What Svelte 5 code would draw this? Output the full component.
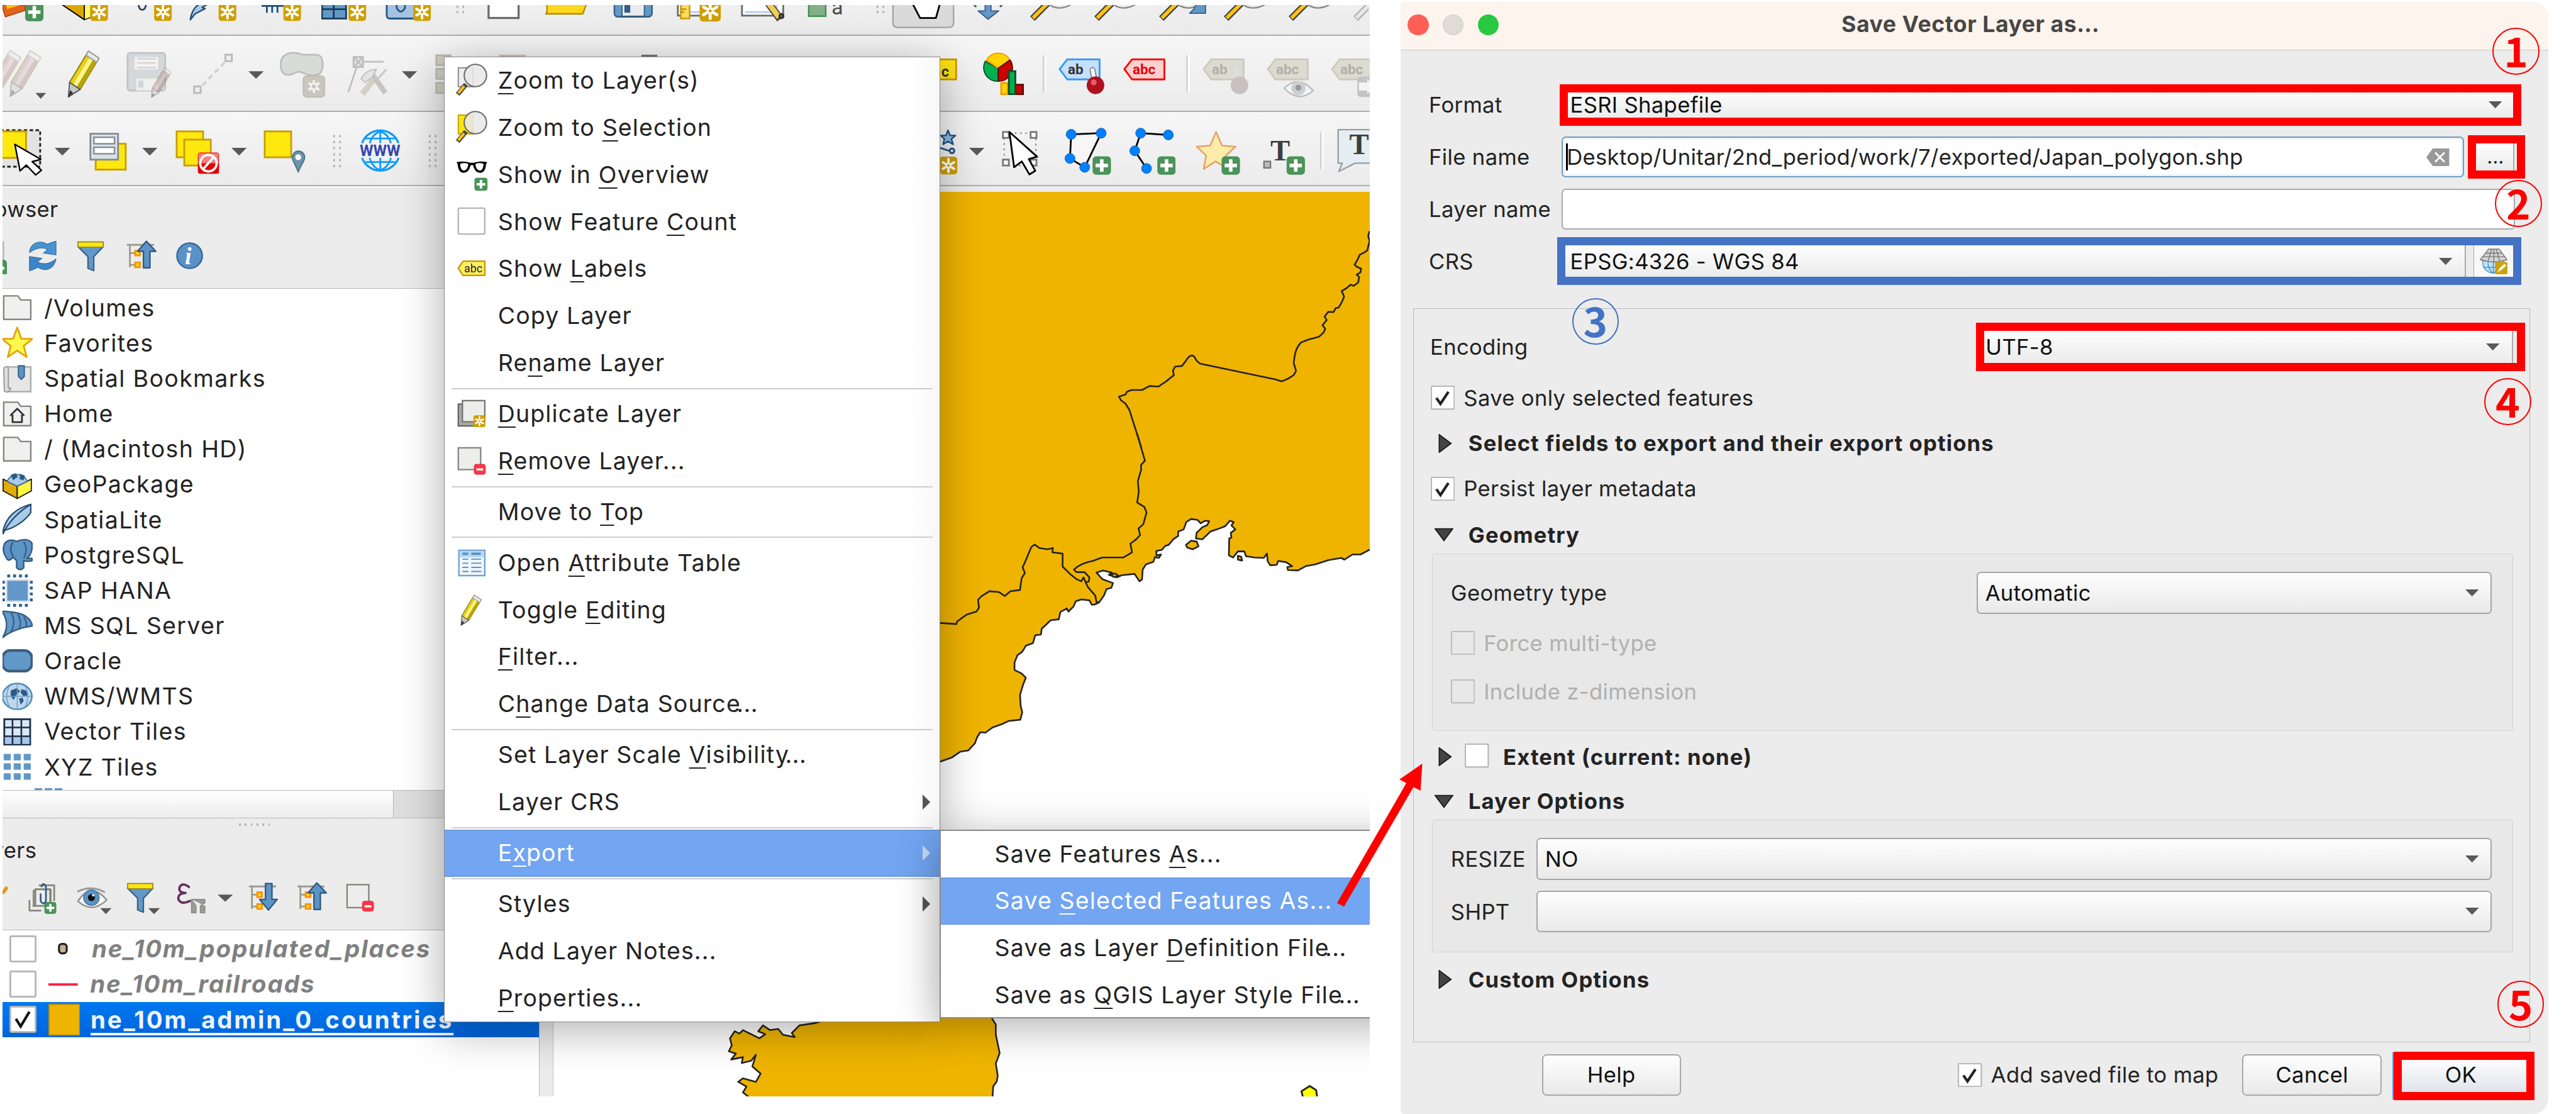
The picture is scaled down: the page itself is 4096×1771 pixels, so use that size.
<script>
  // ---- small drawing helpers; every icon strip shares the window's coordinates ----
  const rect = (x, y, w, h, fill, stroke = 'none', sw = 3, r = 0) =>
    `<rect x="${x}" y="${y}" width="${w}" height="${h}" rx="${r}" fill="${fill}" stroke="${stroke}" stroke-width="${sw}"/>`;
  const path = (d, fill = 'none', stroke = 'none', sw = 3, extra = '') =>
    `<path d="${d}" fill="${fill}" stroke="${stroke}" stroke-width="${sw}" stroke-linejoin="round" ${extra}/>`;
  const dot = (cx, cy, r, fill, stroke = 'none', sw = 2) =>
    `<circle cx="${cx}" cy="${cy}" r="${r}" fill="${fill}" stroke="${stroke}" stroke-width="${sw}"/>`;
  const text = (x, y, size, fill, t, extra = '') =>
    `<text x="${x}" y="${y}" font-size="${size}" fill="${fill}" font-family="Roboto, sans-serif" ${extra}>${t}</text>`;
  const down = (x, y, w = 26, h = 13) => path(`M${x} ${y}h${w}l${-w / 2} ${h}z`, '#595959');
  const plus = (x, y, s = 30) =>
    rect(x, y, s, s, '#4b9358', '#3f8a50', 1, s / 6) +
    path(`M${x + s / 2} ${y + s * 0.15}v${s * 0.7}M${x + s * 0.15} ${y + s / 2}h${s * 0.7}`, 'none', '#fff', s * 0.2);
  const spark = (x, y, s = 30, fill = '#cf9f04') => {
    const c = s / 2, a = s * 0.36, b = a * 0.5, e = a * 0.87;
    return rect(x, y, s, s, fill, 'none', 0, s / 6) +
      path(`M${x + c} ${y + c - a}v${2 * a}M${x + c - e} ${y + c - b}l${2 * e} ${2 * b}M${x + c + e} ${y + c - b}l${-2 * e} ${2 * b}`, 'none', '#fff', s * 0.14, 'stroke-linecap="round"') +
      dot(x + c, y + c, s * 0.07, fill);
  };
  const minus = (x, y, s) => rect(x, y, s, s * 0.9, '#ff3545', '#e02637', 1, s / 5) + rect(x + s * 0.2, y + s * 0.36, s * 0.6, s * 0.2, '#fff');
  const grip = (x, ys) => ys.map((y) => rect(x, y, 3, 4, '#b4b4b4') + rect(x + 10, y, 3, 4, '#b4b4b4')).join('');
  const rows6 = [229, 239, 249, 260, 270, 280];
  const sep = (x, y) => rect(x, y, 3, 63, '#d2d2d2') + rect(x + 3, y, 3, 63, '#fff');
  const cursor = (x, y, s = 1) =>
    `<g transform="translate(${x} ${y}) scale(${s})">` + path('M0 0L9 46L20 36L36 53L46 45L30 30L45 26Z', '#fff', '#000', 2.6) + '</g>';
  const lens = (x, grey = false) =>
    `<g opacity="${grey ? 0.35 : 1}">` + path(`M${x + 4} 32L${x + 30} 6`, 'none', '#444', 11) + path(`M${x + 5} 31L${x + 29} 7`, 'none', grey ? '#ddd' : '#fcc411', 6) +
    path(`M${x + 30} 6q18 16 44 0`, '#eee', '#888', 2.5) + '</g>';
  const tag = (x, y, w, h, fill, stroke, t, color, size = 24) =>
    path(`M${x} ${y + h / 2}L${x + 13} ${y + 1}H${x + w}V${y + h}H${x + 13}Z`, fill, stroke, 3) +
    text(x + 14, y + h * 0.76, size, color, t, 'font-weight="700"');
  const funnel = (x, y) =>
    path(`M${x + 1} ${y + 9}L${x + 18} ${y + 26}V${y + 46}L${x + 28} ${y + 50}V${y + 26}L${x + 44} ${y + 9}Z`, '#6198c8', '#355d82', 2.2) +
    rect(x + 1, y + 1, 43, 9, '#fbe610', '#9a8a2c', 2);
  const tree = (x, y, up) =>
    path(`M${x} ${y + 6}h46M${x + 5} ${y + 6}v38M${x + 5} ${y + 20}h10M${x + 5} ${y + 40}h10`, 'none', '#9b9b90', 3) +
    rect(x + 14, y + 16, 8, 8, '#ffe00d', '#fe8d01', 3) + rect(x + 14, y + 36, 8, 8, '#ffe00d', '#fe8d01', 3) +
    path(up ? `M${x + 33} ${y}L${x + 49} ${y + 17}H${x + 39}V${y + 45}H${x + 28}V${y + 17}H${x + 18}Z`
            : `M${x + 33} ${y + 46}L${x + 48} ${y + 28}H${x + 39}V${y + 1}H${x + 28}V${y + 28}H${x + 18}Z`, '#5c94c6', '#2f5a80', 2.5);
  const pencil = (x, y, s = 1, o = 1) =>
    `<g opacity="${o}" transform="translate(${x} ${y}) scale(${s})">` +
    path('M3 53L35 0L53 12L21 65Z', o < 1 ? '#b98e8e' : '#e8d015', '#8a7c12', 2) + path('M9 57L41 4L47 8L15 61Z', o < 1 ? '#d0b4b4' : '#fbf38f') + path('M15 61L47 8L53 12L21 65Z', o < 1 ? '#a07a7a' : '#b7a506') +
    path('M35 0L53 12L49 19L31 7Z', '#e9e9ec', '#9a9a9a', 2) + path('M3 53L21 65L1 78Z', '#c7c7c7', '#555', 2) + path('M1 78L4 66L9 71Z', '#333') + '</g>';

  // ---- toolbars: [left edge, width, drawing] ----
  const bar1 = [
    [4, 72, path('M4 9H42V18L9 29L4 13Z', '#e4631e', '#b5440c', 2) + path('M10 9H34L12 16Z', '#fbc412') + plus(43, 6)],
    [100, 84, path('M103 7L143 34V7Z', '#dba800', '#000', 2) + path('M143 7H154V30L143 34Z', '#fdf969', '#000', 1.5) + spark(153, 6)],
    [232, 62, path('M236 6C234 21 249 21 248 6', 'none', '#2b4a68', 3) + spark(262, 6)],
    [320, 84, path('M324 34C326 18 334 10 340 7H354L344 13L349 15L332 24Z', '#a9c8e8', '#254b73', 2.5) + spark(372, 6)],
    [444, 70, rect(445, 7, 38, 5, '#1d4f7c') + path('M454 9V22M463 9V22M472 9V22', 'none', '#1d4f7c', 3) + spark(482, 6)],
    [546, 78, rect(547, 5, 41, 27, '#6198c8', '#1b3b58', 3) + path('M567 5V32M547 16H588', 'none', '#1b3b58', 3) + spark(592, 6)],
    [655, 80, rect(657, -10, 50, 42, '#a5c2e2', '#24557e', 3, 5) + path('M674 6V14Q681 26 688 14V6', 'none', '#24557e', 3) + spark(702, 6)],
    [774, 18, grip(776, [10, 19])],
    [828, 56, rect(830, 0, 51, 31, '#fff', '#6a6a6a', 3.5)],
    [926, 72, path('M930 7V21L928 24H991L997 7Z', '#fdd71c', '#b38b06', 2.5)],
    [1042, 68, rect(1044, -10, 64, 39, '#6198c8', '#355d82', 2.5, 6) + rect(1057, 0, 38, 28, '#e9ecee', '#355d82', 2) + rect(1061, 0, 10, 22, '#355d82')],
    [1149, 78, rect(1152, 0, 60, 27, '#fff', '#6a6a6a', 3) + path('M1160 21H1210', 'none', '#b9cff5', 3) + rect(1157, 0, 15, 32, '#fddc55', '#c8930b', 2.5) + path('M1157 16h9M1157 21h6', 'none', '#b27d05', 2) + spark(1189, 1, 36)],
    [1258, 78, rect(1261, 0, 70, 27, '#fff', '#6a6a6a', 3) + path('M1266 21H1320V0', 'none', '#b9cff5', 3) + path('M1306 6L1326 33', 'none', '#4a4536', 13) + path('M1306 6L1324 30', 'none', '#f1ce54', 9) + dot(1328, 28, 4, '#555', '#222')],
    [1372, 66, rect(1374, 0, 29, 28, '#82b088', '#3f8f4e', 2.5) + text(1413, 25, 36, '#4c4c4c', 'a')],
    [1488, 18, grip(1490, [10, 19])],
    [1516, 108, rect(1518, -12, 103, 59, '#dadada', '#a3a3a3', 2.5, 7) + path('M1551 6L1564 31H1591L1598 6', '#fff', '#000', 3)],
    [1650, 56, path('M1674 4V19H1662L1679 33L1697 19H1684V4Z', '#6198c8', '#355d82', 2) + path('M1655 9l4 3M1703 9l-4 3', 'none', '#355d82', 3)],
    [1748, 72, lens(1750)], [1858, 72, lens(1860)],
    [1968, 84, lens(1970) + path('M2034 6H2049V23H2022L2029 16Z', '#6198c8', '#355d82', 2)],
    [2078, 72, lens(2080)], [2188, 72, lens(2190)], [2298, 28, lens(2300, true)]
  ];
  const faded = (x, y, h) => rect(x, y, 24, h, '#cfcdc2', '#bbb9ae', 3);
  const bar2 = [
    [4, 76, pencil(-18, 86, 1, 0.35) + pencil(16, 86, 1, 0.35) + down(60, 158, 18, 10)],
    [112, 60, pencil(115, 87)],
    [214, 80, rect(217, 90, 64, 64, '#d5d8db', '#c0c3c7', 3, 5) + rect(229, 97, 40, 21, '#f2f2f2') + path('M233 100h32M233 107h32M233 115h32', 'none', '#d2d4d6', 2.5) + rect(232, 134, 36, 20, '#efefef') + rect(235, 137, 9, 12, '#d2d5d8') + pencil(257, 115, .65, .45)],
    [326, 72, rect(383, 93, 11, 11, '#eee', '#b9b9b9', 3) + rect(330, 147, 11, 11, '#eee', '#b9b9b9', 3) + path('M344 145L382 106', 'none', '#cdd3cf', 4, 'stroke-dasharray="9 6"')],
    [422, 28, down(422, 121)],
    [474, 80, path('M478 115C474 90 496 87 512 92C530 97 548 84 549 108C549 126 541 128 532 128C518 128 512 118 501 124C486 132 479 124 478 115Z', '#d8dcd9', '#bcbfbd', 3) + rect(516, 129, 36, 36, '#c9c7bb', '#bdbbae', 2, 6) + path('M534 136v22M525 141l18 12M543 141l-18 12', 'none', '#f2f2f2', 4) + dot(534, 147, 5, '#c9c7bb', '#f2f2f2', 3)],
    [588, 72, rect(601, 97, 16, 17, '#e2e2e2', '#bbb', 3) + path('M603 99l12 13M615 99l-12 13M617 105h35M606 115L592 157', 'none', '#c0c0c0', 3) + path('M616 160L634 136', 'none', '#d3d0c4', 10) + path('M655 158L634 128', 'none', '#c9c3be', 9) + path('M614 134Q622 118 640 118L632 132L620 140Z', '#e4e4e4', '#bdbdbd', 2) + path('M642 134L657 118', 'none', '#cdcdcd', 4)],
    [683, 28, down(683, 121)],
    [738, 52, faded(741, 94, 17) + faded(741, 117, 17) + faded(741, 141, 17)],
    [792, 240, rect(848, 93, 46, 5, '#cfc2b6')],
    [1088, 40, rect(1090, 93, 27, 5, '#777')],
    [1598, 34, rect(1580, 101, 45, 34, '#ffe310', '#c79800', 3) + text(1600, 130, 25, '#333', 'c', 'font-weight="700"')],
    [1670, 72, path('M1696 116L1674 104A23 23 0 0 0 1696 138Z', '#00b04e', '#114b28', 2) + path('M1696 116L1676 102A23 23 0 0 1 1716 102Z', '#ffd400', '#fa9b00', 2) + path('M1696 116L1716 102A23 23 0 0 1 1696 138Z', '#cc0000', '#5c0000', 2) + rect(1701, 141, 11, 19, '#ffd400', '#f79a00', 3) + rect(1725, 144, 13, 16, '#c00', '#640000', 3) + rect(1714, 121, 11, 39, '#00b04e', '#114b28', 3)],
    [1772, 8, sep(1772, 94)],
    [1798, 82, tag(1801, 100, 68, 35, '#c4e0fc', '#3397f8', 'ab', '#333') + path('M1857 119L1861 140', 'none', '#888', 10, 'stroke-linecap="round"') + path('M1857 119L1861 140', 'none', '#fff', 6, 'stroke-linecap="round"') + dot(1862, 145, 15, '#b0101f') + dot(1859, 140, 5, '#e75b64')],
    [1908, 76, tag(1911, 100, 68, 35, '#ffd0d0', '#fb0000', 'abc', '#e60012')],
    [2016, 8, sep(2016, 94)],
    [2042, 82, tag(2045, 100, 68, 35, '#dcdbd0', '#cbcabf', 'ab', '#b0b0a8') + path('M2100 119L2104 140', 'none', '#ddd', 9, 'stroke-linecap="round"') + dot(2106, 145, 15, '#cbc0c0')],
    [2152, 84, tag(2154, 100, 68, 35, '#dcdbd0', '#cbcabf', 'abc', '#b0b0a8') + path('M2182 150Q2206 126 2231 154Q2206 176 2182 150Z', '#f4f4f4', '#bcbcbc', 2.5) + dot(2206, 150, 12, '#c8d0d6') + dot(2206, 149, 5, '#999')],
    [2262, 66, tag(2264, 100, 68, 35, '#dcdbd0', '#cbcabf', 'abc', '#b0b0a8') + rect(2307, 130, 40, 35, '#c3c5c5', 'none', 0, 6) + path('M2310 140h14v-6l12 13l-12 13v-6h-14z', '#f4f4f4')]
  ];
  const bluedot = (x, y) => dot(x, y, 8.5, '#0080ff', '#1b5fae', 1);
  const bar3 = [
    [4, 72, rect(-10, 221, 78, 62, '#e3e3e3', '#222', 3).replace('/>', ' stroke-dasharray="6 4"/>') + rect(-10, 223, 54, 45, '#ffe80d', '#c99c06', 3) + cursor(25, 245, .98)],
    [93, 27, down(93, 251)],
    [150, 68, rect(163, 244, 51, 44, '#ffe80d', '#c99c06', 3) + rect(154, 227, 47, 44, '#d7e3ee', '#868a8e', 3) + rect(160, 233, 35, 11, '#fff', '#868a8e', 2.5) + rect(160, 250, 35, 11, '#fff', '#868a8e', 2.5)],
    [242, 28, down(242, 251)],
    [298, 76, rect(300, 223, 45, 44, '#ffe80d', '#c99c06', 3) + rect(313, 237, 45, 44, '#ffe80d', '#c99c06', 3) + rect(336, 259, 36, 36, '#e50000', 'none', 0, 4) + path('M337 277V260H371V277Z', '#fa7d7d') + `<circle cx="354" cy="277" r="14" fill="none" stroke="#fff" stroke-width="4"/>` + path('M345 287L363 267', 'none', '#fff', 4)],
    [393, 28, down(393, 251)],
    [448, 74, rect(450, 223, 45, 44, '#ffe80d', '#c99c06', 3) + path('M507 292C502 278 497 274 497 267A10.5 10.5 0 0 1 518 267C518 274 512 278 507 292Z', '#6d95aa', '#4b7287', 2) + dot(507, 267, 5, '#fff')],
    [564, 20, grip(566, rows6)],
    [610, 72, path('M615 243A33 33 0 0 1 677 243M615 268A33 33 0 0 0 677 268', 'none', '#0e9bff', 3.5) + path('M646 223V243M628 243Q632 228 646 223Q660 228 664 243M621 235H671M646 268V289M628 268Q632 284 646 289Q660 284 664 268M621 275H671', 'none', '#0e9bff', 3) + text(611, 265, 27, '#3446b4', 'WWW', 'font-weight="700" textLength="69" lengthAdjust="spacingAndGlyphs"')],
    [727, 20, grip(729, rows6)],
    [1598, 30, path('M1611 221l4 9h9l-7 6l3 9l-9-5l-8 5l2-9l-6-6h9z', '#8fb9e0', '#1f5182', 2.5) + path('M1598 251L1613 256', 'none', '#1f5182', 3) + dot(1618, 256, 4, '#cfe0f0', '#1f5182', 3) + spark(1597, 266, 30)],
    [1647, 27, down(1647, 251)],
    [1700, 66, rect(1706, 226, 54, 55, 'none', '#777', 2).replace('/>', ' stroke-dasharray="3 6"/>') + rect(1704, 224, 10, 10, '#fff', '#777', 3) + rect(1751, 224, 10, 10, '#fff', '#777', 3) + rect(1704, 271, 10, 10, '#fff', '#777', 3) + rect(1751, 271, 10, 10, '#fff', '#777', 3) + `<g transform="translate(1715 224)">` + path('M0 0L8 60L21 50L34 72L44 66L33 46L47 42Z', '#fff', '#000', 3) + '</g>'],
    [1808, 80, path('M1820 228L1871 226L1843 284L1818 269Z', '#f6f6f6', '#000', 3) + bluedot(1820, 228) + bluedot(1871, 226) + bluedot(1843, 284) + bluedot(1818, 269) + plus(1857, 266)],
    [1918, 80, path('M1985 229L1938 226L1928 256L1948 286', 'none', '#000', 3) + bluedot(1985, 229) + bluedot(1938, 226) + bluedot(1928, 256) + bluedot(1948, 286) + plus(1967, 266)],
    [2030, 78, path('M2067 224L2077 247L2100 249L2083 265L2086 286L2066 274L2046 287L2050 264L2034 249L2057 247Z', '#fdecaa', '#e59c5f', 2.5) + plus(2077, 266)],
    [2145, 74, rect(2148, 274, 11, 11, '#bbb', '#777', 2.5) + text(2159, 272, 50, '#3d3d3d', 'T', 'style="font-family:\'Liberation Serif\',serif;font-weight:700"') + plus(2187, 266)],
    [2242, 8, sep(2243, 224)],
    [2270, 58, path('M2340 220H2274V277H2281L2275 291L2303 277H2340', '#e5eff3', '#9b9ea0', 2.5) + text(2293, 262, 50, '#3d3d3d', 'T', 'style="font-family:\'Liberation Serif\',serif;font-weight:700"')]
  ];
  const browserBar = [
    [4, 10, rect(4, 411, 3, 32, '#bbb') + plus(-16, 443, 27)],
    [48, 50, path('M50 430C52 414 66 408 80 416L88 413L95 411V434L74 431L81 425C70 419 60 423 50 430Z', '#4a93d2', '#3577b0', 1.5) + path('M95 441C92 457 78 464 64 455L56 459L50 461V437L71 440L63 446C74 452 86 448 95 441Z', '#3c85c6', '#3577b0', 1.5)],
    [132, 48, funnel(132, 411)],
    [214, 54, tree(216, 411, true)],
    [299, 48, dot(322, 435.5, 21.5, '#5a92c8', '#34679a', 2.5) + text(314, 450, 40, '#fff', 'i', 'style="font-family:\'Liberation Serif\',serif;font-weight:700;font-style:italic"')]
  ];
  const layersBar = [
    [4, 10, path('M4 1519L12 1508', 'none', '#e8952c', 6)],
    [48, 50, path('M62 1514H57V1542M66 1505H92V1532M60 1512H86V1540M50 1530V1548H70', 'none', '#86867c', 3) + rect(60, 1512, 25, 28, '#eee', '#86867c', 3) + path('M69 1519V1532Q74 1540 78 1532V1508Q74 1498 70 1508', 'none', '#355d82', 3) + plus(76, 1534, 19)],
    [130, 60, path('M131 1516Q155 1504 178 1517', 'none', '#999', 3) + path('M132 1532Q155 1498 181 1530Q156 1554 132 1532Z', '#f6f6f6', '#8f8f88', 2.5) + dot(155, 1526, 13, '#5c94c6', '#47799f') + dot(155, 1526, 6, '#111') + dot(158, 1522, 2, '#fff') + down(170, 1544, 19, 10)],
    [215, 58, funnel(216, 1501) + down(252, 1544, 20, 10)],
    [300, 52, path('M322 1509Q310 1499 305 1508Q302 1518 315 1518Q301 1519 303 1529Q308 1539 324 1531', 'none', '#66305f', 4) + path('M325 1529H348V1535L340 1540V1552H348V1540M325 1529V1552H333V1540Z', '#9a9a94', '#8a8a84', 1.5)],
    [370, 27, down(370, 1521, 26, 12)],
    [422, 52, tree(423, 1501, false)],
    [505, 52, tree(506, 1501, true)],
    [588, 50, rect(590, 1504, 37, 39, '#ededed', '#86867c', 2.5) + minus(616, 1532, 19)]
  ];
  // distance from the end of the previous icon
  const gaps = (items, start) => items.map(([x, w, art], i) => ({ x, w, art, gap: x - (i ? items[i - 1][0] + items[i - 1][1] : start) }));

  // ---- browser tree, icons on a 52 x 60 grid ----
  const folder = path('M2 50V10H26L31 17H48V50Z', '#f0f0f0', '#86867c', 2.6);
  const globeLand = path('M14 20l10-4l6 5l-7 7l-4 8l-5-6zM32 18l8 2l3 8l-7 2l-5-6zM28 34l6-2l2 6l-5 6z', '#2c5a86');
  const tree2 = [
    ['/Volumes', folder],
    ['Favorites', path('M25 3L32 22L51 22L36 34L41 53L25 42L9 53L14 34L-1 22L18 22Z', '#fff94d', '#e0a60c', 3)],
    ['Spatial Bookmarks', rect(7, 10, 41, 42, '#e6e6e6', '#aaa', 2.5) + path('M2 12Q6 7 10 12V46H14Q10 56 3 51Z', '#ddd', '#9a9a9a', 2) + path('M27 8H37V26L32 31L27 26Z', '#5c94c6', '#355d82', 2)],
    ['Home', folder + path('M13 33L25 21L37 33M17 31V44H33V31', 'none', '#333', 3)],
    ['/ (Macintosh HD)', folder],
    ['GeoPackage', path('M1 21L25 33V54L1 41Z', '#e0ac05', '#222', 2) + path('M25 33L49 21V41L25 54Z', '#fef63d', '#222', 2) + path('M8 25A18 18 0 0 1 42 25L25 33Z', '#a9c9e6', '#3c6f9f', 2) + path('M14 14l8-3l4 6l-8 6zM30 12l8 3l-2 8l-7-2z', '#2c5a86')],
    ['SpatiaLite', path('M0 54C4 26 24 10 48 4V18C40 30 22 44 4 48Z', '#a9cbe9', '#254b73', 2.4) + path('M1 54C10 34 28 16 48 4', 'none', '#254b73', 2.4)],
    ['PostgreSQL', path('M4 10Q12 2 24 7Q42 0 50 10Q52 26 42 36H50V40Q42 42 36 40V52Q30 58 24 52V40L18 34Q10 44 6 34Q-2 22 4 10Z', '#5c94c6', '#355d82', 2.6) + path('M18 8Q10 20 18 33M36 8Q44 20 36 36', 'none', '#355d82', 2.4)],
    ['SAP HANA', rect(7, 12, 37, 36, '#6198c8', '#d6dbe6', 2.5) + path('M8 5H44M8 55H44', 'none', '#2f6190', 5, 'stroke-dasharray="5 5"') + path('M1.500 13V50M49 13V50', 'none', '#2f6190', 5, 'stroke-dasharray="5 5"')],
    ['MS SQL Server', path('M-1 5C26 6 46 10 51 30C36 32 14 38 0 50C10 34 8 18 -1 5Z', '#6198c8', '#355d82', 2.6) + path('M14 7Q24 22 14 41M26 10Q34 24 28 34M36 14Q42 24 40 31', 'none', '#355d82', 2.4)],
    ['Oracle', rect(0, 12, 50, 35, '#6198c8', '#3a5f82', 4.500, 13)],
    ['WMS/WMTS', `<ellipse cx="25" cy="30" rx="25" ry="22" fill="#bcd6ee" stroke="#4e86b8" stroke-width="2.5"/>` + globeLand + path('M1 30H49M25 8V52M12 12Q2 30 12 48M38 12Q48 30 38 48', 'none', '#6f9fc8', 1.6)],
    ['Vector Tiles', rect(3, 9, 44, 43, '#dce7f5', '#1b3046', 3) + rect(4, 38, 42, 13, '#a8c6ea') + path('M17 9V52M32 9V52M3 23H47M3 38H47', 'none', '#1b3046', 2.8)],
    ['XYZ Tiles', [8, 24, 41].map((y) => [2, 19, 36].map((x) => rect(x, y, 12, 11, '#6198c8')).join('')).join('')]
  ];
  const layers = [
    { name: 'ne_10m_populated_places', sym: rect(18, 22, 13, 16, '#c9b28c', '#222', 3.500, 5), cls: 'off l1' },
    { name: 'ne_10m_railroads', sym: rect(0, 28, 50, 4, '#fb2040'), cls: 'off l2' },
    { name: 'ne_10m_admin_0_countries', sym: rect(1, 4, 52, 52, '#efb400', '#b98c0b', 2), cls: 'on', checked: true }
  ];

  // ---- context menu: text before / mnemonic / text after ----
  const mag = (fill, stroke) =>
    rect(4, 18, 25, 32, fill, stroke, 2) + path('M3 63L17 46', 'none', '#444', 8) + path('M4 61L14 49', 'none', '#fcc411', 4.500) + dot(33, 31, 19, 'rgba(232,232,232,.88)', '#6a6a6a', 2.2);
  const M = (a, b, c, o = {}) => ({ a, b, c, ...o });
  const menu = [
    M('', 'Z', 'oom to Layer(s)', { icon: mag('#eee', '#888') }),
    M('Zoom to ', 'S', 'election', { icon: mag('#fbe50e', '#c39a0a') }),
    M('Show in ', 'O', 'verview', { icon: path('M1 18Q13 15 24 19H30Q42 15 53 18L51 22Q50 36 41 36Q32 36 29 23H25Q22 36 13 36Q4 36 3 22Z', '#000') + path('M7 21Q14 18 21 21Q20 32 13 32Q8 32 7 21ZM33 21Q40 18 47 21Q46 32 41 32Q34 32 33 21Z', '#fff') + plus(32, 45, 21) }),
    M('Show Feature ', 'C', 'ount', { icon: rect(4, 17, 45, 44, '#fff', '#b5b5b5', 2.500, 2) }),
    M('Show ', 'L', 'abels', { icon: path('M4 39L12 27H49V51H12Z', '#fff062', '#cc9b00', 2.600) + text(14, 46, 19, '#222', 'abc') }),
    M('Copy Layer', '', ''),
    M('Re', 'n', 'ame Layer'),
    null,
    M('', 'D', 'uplicate Layer', { icon: rect(4, 23, 32, 37, '#a9a9a0', '#666', 2.500) + rect(11, 17, 38, 36, '#ededec', '#777', 2.500) + spark(30, 42, 20) }),
    M('', 'R', 'emove Layer...', { icon: rect(4, 17, 38, 37, '#ededec', '#888', 2.500) + minus(31, 45, 19) }),
    null,
    M('Move to ', 'T', 'op'),
    null,
    M('Open ', 'A', 'ttribute Table', { icon: rect(5, 18, 44, 43, '#f1f5fa', '#6da2d3', 2.500) + rect(6, 19, 42, 11, '#b7d8f2') + path('M11 24h10M26 24h16', 'none', '#5790c4', 4) + path('M11 33h10M26 33h17M11 40h10M26 40h17M11 47h10M26 47h17M11 54h10M26 54h17', 'none', '#5790c4', 2) }),
    M('Toggle ', 'E', 'diting', { icon: pencil(8, 14, .66) }),
    M('', 'F', 'ilter...'),
    M('C', 'h', 'ange Data Source...', { tight: true }),
    null,
    M('Set Layer Scale ', 'V', 'isibility...', { tight: true }),
    M('Layer CRS', '', '', { sub: true }),
    null,
    M('E', 'x', 'port', { sub: true, hot: true }),
    null,
    M('Styles', '', '', { sub: true }),
    M('Add Layer Notes...', '', ''),
    M('', 'P', 'roperties...')
  ];
  const submenu = [
    M('Save Features ', 'A', 's...'),
    M('Save ', 'S', 'elected Features As...', { hot: true }),
    M('Save as Layer ', 'D', 'efinition File...', { tight: true }),
    M('Save as ', 'Q', 'GIS Layer Style File...', { tight: true })
  ];

  const border1 = 'M1503 810L1498 828L1503 845L1495 878L1485 885L1470 893L1464 908L1453 928L1460 935L1475 942L1472 955L1460 963L1468 970L1465 990L1450 1002L1440 998L1425 1011L1410 1020L1418 1040L1410 1060L1400 1078L1390 1080L1383 1094L1365 1093L1353 1110L1360 1122L1346 1140L1355 1152L1350 1165L1335 1180L1300 1190L1275 1200Q1258 1218 1254 1245L1250 1272L1258 1300L1250 1315L1230 1328L1210 1337L1190 1330L940 1275Q928 1270 920 1252Q912 1240 900 1252L878 1283L855 1285L848 1300L851 1315L830 1333L800 1355L770 1353L745 1367L710 1367L695 1373L690 1383L668 1390L675 1403L690 1415L703 1437L742 1567';
  const border2 = 'M678 -4L702 58L690 68L690 80L680 105L683 130L678 155L700 165L707 178L697 205L682 215L687 230L675 240L657 250L662 270L635 282L570 282L540 290Q500 296 482 310L490 316L515 316L530 328L528 338L518 339L512 328L505 337L490 332L470 320L447 303L447 273L415 270L417 260L400 263L375 260L360 252L350 258L332 290L323 305L330 318L320 330L315 357L285 360L268 371L250 362L220 360L195 372L185 380L188 398L180 407L150 414L120 430L118 436L60 433M518 339L525 350L548 370L552 385L560 386';
  const coast = 'M1400 263L1370 275L1345 275L1320 287L1310 283L1270 288L1230 298L1200 302L1176 312L1145 311L1143 304L1158 302L1140 293L1115 290L1110 299L1090 300L1082 290L1080 273L1070 283L1040 282L1015 279L1010 268L990 268L975 282L962 277L963 238L970 236L968 225L982 217L970 208L977 200L965 197L950 210L925 217L905 222L880 240L860 238L862 225L880 212L895 207L901 198L888 197L875 203L865 195L845 193L830 200L822 217L805 222L805 232L790 240L775 253L765 255L755 264L737 267L738 277L752 275L745 283L733 281L728 292L705 298L695 310L693 333L685 337L670 320L630 323L615 328L590 322L600 317L572 312L552 317L570 332L603 341L598 352L583 355L575 370L560 386L545 391L537 391L530 381L505 379L488 383L480 396L465 407L460 400L440 408L435 425L410 427L395 438L382 447L380 460L362 462L355 480L333 486L322 500L307 508L298 525L298 542L320 550L333 560L325 575L315 600L317 625L322 640L316 657L280 660L260 667L230 675L208 687L192 686L182 698L175 712L155 728L130 731L105 744L60 756';
</script>

{#snippet strip(items, top, height, start = 4)}
  {#each gaps(items, start) as it}
    <svg class="tool" width={it.w} {height} viewBox="{it.x} {top} {it.w} {height}" style:margin-left="{it.gap}px">{@html it.art}</svg>
  {/each}
{/snippet}

{#snippet entry(m)}
  <div class="entry" class:hot={m.hot}>
    <svg class="glyph" viewBox="0 0 54 80">{@html m.icon ?? ''}</svg>
    <span class="caption">{m.a}<u>{m.b}</u>{#if m.tight}{m.c.slice(0, -3)}<span class="dots">...</span>{:else}{m.c}{/if}</span>
    {#if m.sub}<svg class="more" viewBox="0 0 13 26"><path d="M0 0L13 13L0 26Z" /></svg>{/if}
  </div>
{/snippet}

{#snippet check(on = false, off = false)}
  <svg class="check" class:off viewBox="0 0 41 41">
    <rect x="1" y="1" width="39" height="39" rx="2" />
    {#if on}<path d="M9.500 21L16.500 31L30 10.500" />{/if}
  </svg>
{/snippet}

{#snippet caret()}<svg class="caret" viewBox="0 0 23 12"><path d="M0 0H23L11.500 12Z" /></svg>{/snippet}
{#snippet twisty(open = false)}
  <svg class="twisty" viewBox="0 0 32 32"><path d={open ? 'M1 6H31L16 26Z' : 'M8 1L28 16L8 31Z'} /></svg>
{/snippet}

<div class="canvas">
  <section class="qgis">
    <div class="bar b1">{@render strip(bar1, 9, 49)}</div>
    <div class="bar b2">{@render strip(bar2, 61, 126)}</div>
    <div class="bar b3">{@render strip(bar3, 190, 123)}</div>
    <div class="work">
      <aside class="dock">
        <h2 class="dock-title browser"><span>Browser</span></h2>
        <div class="dock-tools t1">{@render strip(browserBar, 405, 62)}</div>
        <ul class="tree">
          {#each tree2 as [name, art]}
            <li><svg viewBox="0 0 52 60">{@html art}</svg><span>{name}</span></li>
          {/each}
          <li class="peek"><i></i><i></i><i></i></li>
        </ul>
        <div class="hscroll"><div class="thumb"></div></div>
        <div class="handle">{#each Array(6) as _}<i></i>{/each}</div>
        <h2 class="dock-title layers"><span>Layers</span></h2>
        <div class="dock-tools t2">{@render strip(layersBar, 1495, 64)}</div>
        <ul class="layer-list">
          {#each layers as l}
            <li class={l.cls}>
              <svg class="box" viewBox="0 0 46 46">
                <rect x="1.500" y="1.500" width="43" height="43" fill="#fff" stroke="#b4b4b4" stroke-width="3" rx="2" />
                {#if l.checked}<path d="M11 22L19 35L34 10" fill="none" stroke="#111" stroke-width="4.500" />{/if}
              </svg>
              <svg class="sym" viewBox="0 0 54 60">{@html l.sym}</svg>
              <span>{l.name}</span>
            </li>
          {/each}
        </ul>
      </aside>
      <div class="splitter"></div>
      <svg class="map" viewBox="940 326 1387 1537">
        <rect x="940" y="326" width="1387" height="1537" fill="#fff" />
        <g transform="translate(1560 740) scale(.5485 .7347)">
          <path d="{coast}H-400V-600H1500V263Z" fill="#efb400" />
          <path class="line" d={coast} />
          <path class="line" d={border2} />
          <path class="line gold" d="M829 253L845 243L862 245L868 256L850 263L833 259Z" />
          <path class="line gold" d="M990 278L1000 280L1003 289L990 287Z" />
          <path class="line gold" d="M595 321L610 319L622 325L605 327Z" />
          <path class="line gold" d="M222 1340L240 1362L240 1385L252 1428L240 1452L246 1480L243 1493L232 1505L229 1540H-300V1340Z" />
        </g>
        <g transform="translate(1560 0) scale(.5102 .4847)"><path class="line" d={border1} /></g>
        <path class="line gold" d="M1420 1728L1385 1738L1358 1742L1345 1755L1350 1762L1330 1758L1322 1748L1308 1750L1296 1742L1288 1752L1300 1757L1290 1764L1262 1750L1256 1756L1248 1752L1240 1764L1243 1776L1238 1786L1250 1790L1242 1800L1262 1796L1260 1806L1276 1802L1284 1792L1278 1812L1292 1824L1284 1838L1262 1832L1254 1838L1268 1846L1262 1856L1280 1870H1430" />
        <rect x="1400" y="1730" width="40" height="140" fill="#efb400" />
        <path d="M2211 1854L2225 1845L2236 1852L2238 1866H2214Z" fill="#ff0" stroke="#222" stroke-width="3" />
      </svg>
    </div>

    <div class="menu main">
      {#each menu as m}
        {#if m}{@render entry(m)}{:else}<hr />{/if}
      {/each}
    </div>
    <div class="menu sub">
      {#each submenu as m}{@render entry(m)}{/each}
    </div>
  </section>

  <section class="dialog">
    <header>
      <div class="lights"><i class="r"></i><i class="g"></i><i class="n"></i></div>
      <h1>Save Vector Layer as…</h1>
    </header>
    <div class="form">
      <div class="row"><span class="label">Format</span>
        <div class="mark format"><span>ESRI Shapefile</span>{@render caret()}</div></div>
      <div class="row"><span class="label">File name</span>
        <div class="input file"><b></b><span>Desktop/Unitar/2nd_period/work/7/exported/Japan_polygon.shp</span>
          <svg viewBox="0 0 39 30"><path d="M0 15L11 0H39V30H11Z" fill="#999" /><path d="M15 7L31 23M31 7L15 23" stroke="#fff" stroke-width="3" /></svg></div>
        <div class="mark browse"><span>...</span></div></div>
      <div class="row"><span class="label">Layer name</span><div class="input layer"></div></div>
      <div class="row"><span class="label">CRS</span>
        <div class="mark crs"><div class="combo-part"><span>EPSG:4326 - WGS 84</span>{@render caret()}</div><div class="globe-btn">
          <svg viewBox="0 0 50 44">
            <circle cx="23" cy="24" r="18" fill="#bfe2f8" stroke="#4394c8" stroke-width="1.500" />
            <path d="M23 24V42M14 24Q14 36 23 42M32 24Q32 36 23 42M6 32H40" fill="none" stroke="#4394c8" stroke-width="1.500" />
            <path d="M15 1H33L46 19Q24 27 1 19Z" fill="#d4d4d4" stroke="#777" stroke-width="1.500" />
            <path d="M20 1L14 22M24 1V24M28 1L34 22M10 8H38M5 14H43" fill="none" stroke="#777" stroke-width="1.500" />
            <rect x="26" y="23" width="21" height="21" rx="3" fill="#d0a20a" /><path d="M30 41L34 33L42 26L45 29L37 36Z" fill="#fff" />
          </svg></div></div></div>
    </div>
    <div class="group">
      <div class="row encoding"><span>Encoding</span><div class="mark utf"><span>UTF-8</span>{@render caret()}</div></div>
      <div class="row line46">{@render check(true)}<span class="txt">Save only selected features</span></div>
      <div class="row head h108">{@render twisty()}<strong>Select fields to export and their export options</strong></div>
      <div class="row line46">{@render check(true)}<span class="txt">Persist layer metadata</span></div>
      <div class="row head geo">{@render twisty(true)}<strong>Geometry</strong></div>
      <div class="panel p1">
        <div class="row h86"><span>Geometry type</span><div class="combo auto"><span>Automatic</span>{@render caret()}</div></div>
        <div class="row h84 dim">{@render check(false, true)}<span class="txt">Force multi-type</span></div>
        <div class="row h82 dim">{@render check(false, true)}<span class="txt">Include z-dimension</span></div>
      </div>
      <div class="row head extent">{@render twisty()}{@render check()}<strong>Extent (current: none)</strong></div>
      <div class="row head lopt">{@render twisty(true)}<strong>Layer Options</strong></div>
      <div class="panel p2">
        <div class="row h90"><span class="key">RESIZE</span><div class="combo wide"><span>NO</span>{@render caret()}</div></div>
        <div class="row h89"><span class="key">SHPT</span><div class="combo wide"><span></span>{@render caret()}</div></div>
      </div>
      <div class="row head custom">{@render twisty()}<strong>Custom Options</strong></div>
    </div>
    <footer>
      <div class="button help">Help</div>
      <div class="addmap">{@render check(true)}<span class="txt">Add saved file to map</span></div>
      <div class="button cancel">Cancel</div>
      <div class="mark ok"><span>OK</span></div>
    </footer>
  </section>

  <span class="num n1">1</span>
  <span class="num n2">2</span>
  <span class="num n3">3</span>
  <span class="num n4">4</span>
  <span class="num n5">5</span>
  <svg class="arrow" viewBox="2270 1295 150 247"><path d="M2272 1534L2390 1330L2378 1324L2417 1297L2414 1343L2402 1337L2284 1540Z" fill="#f00" /></svg>
</div>

<style>
  :global(body) { margin: 0; background: #fff; overflow: hidden; }
  .canvas { position: relative; width: 4377px; height: 1892px; overflow: hidden; zoom: 0.9358; background: #fff; font-family: Inter, "Liberation Sans", sans-serif; font-size: 37px; letter-spacing: .35px; color: #232323; line-height: 1; white-space: nowrap; }
  .canvas * { box-sizing: border-box; }
  svg { display: block; flex: none; letter-spacing: 0; }
  ul, h1, h2 { margin: 0; padding: 0; list-style: none; font-weight: 400; }

  .qgis { position: absolute; left: 4px; top: 9px; width: 2323px; height: 1854px; overflow: hidden; background: #ececec; display: flex; flex-direction: column; }
  .bar { display: flex; flex: none; border-bottom: 3px solid #adadad; background: linear-gradient(#f6f6f6, #ebebeb); }
  .b1 { height: 52px; background: linear-gradient(#efefef, #ebebeb); }
  .b2 { height: 129px; }
  .b3 { height: 126px; }
  .work { flex: 1; display: flex; min-height: 0; }
  .dock { width: 912px; flex: none; background: #ececec; display: flex; flex-direction: column; border-top: 3px solid #f8f8f8; }
  .dock-title { display: flex; align-items: center; font-size: 37px; flex: none; overflow: hidden; }
  .browser { height: 86px; padding-bottom: 12px; line-height: 1.3; }
  .browser span { margin-left: -52px; }
  .layers { height: 82px; padding-bottom: 17px; line-height: 1.3; }
  .layers span { margin-left: -60px; }
  .dock-tools { display: flex; flex: none; }
  .t1 { height: 86px; border-bottom: 2px solid #b9b9b9; }
  .t2 { height: 86px; border-bottom: 2px solid #b9b9b9; }
  .tree { height: 852px; flex: none; background: #fff; padding-top: 3px; overflow: hidden; font-size: 40px; letter-spacing: 1.5px; }
  .tree li { height: 60px; display: flex; align-items: center; }
  .tree svg { width: 52px; height: 60px; }
  .tree span { margin-left: 19px; }
  .tree li.peek { align-items: flex-start; gap: 4px; padding: 6px 0 0 55px; }
  .peek i { width: 13px; height: 12px; background: #6198c8; }
  .hscroll { height: 48px; flex: none; background: #dedede; border-top: 2px solid #b9b9b9; border-bottom: 2px solid #b9b9b9; }
  .thumb { width: 665px; height: 100%; background: linear-gradient(#fff, #ececec); border-right: 2px solid #b0b0b0; }
  .handle { display: flex; flex: none; gap: 7px; height: 22px; padding: 9px 0 0 402px; }
  .handle i { width: 3px; height: 4px; background: #b4b4b4; }
  .layer-list { flex: 1; background: #fff; padding-top: 2px; font-size: 41px; font-weight: 700; }
  .layer-list li { height: 60px; display: flex; align-items: center; }
  .box { width: 46px; height: 46px; margin-left: 12px; }
  .sym { width: 54px; height: 60px; margin-left: 20px; }
  .layer-list span { margin-left: 20px; }
  .off { color: #808080; font-style: italic; }
  .l1 { letter-spacing: 2.100px; }
  .l2 { letter-spacing: 2.200px; }
  .layer-list .l2 span { margin-left: 17px; }
  .layer-list .on span { margin-left: 18px; }
  .on { background: linear-gradient(#0078f0, #0064dc); color: #eef5ff; letter-spacing: 3px; }
  .on span { text-decoration: underline; text-decoration-thickness: 4px; text-underline-offset: 7px; text-decoration-skip-ink: none; }
  .splitter { width: 24px; flex: none; background: #ebebeb; border-left: 2px solid #b9b9b9; border-right: 2px solid #c4c4c4; }
  .map { width: 1387px; height: 1537px; margin-top: 10px; }
  .line { fill: none; stroke: #222; stroke-width: 2.8px; vector-effect: non-scaling-stroke; stroke-linejoin: round; }
  .gold { fill: #efb400; }

  .menu { position: absolute; background: #fff; border: 2px solid #8a8a8a; box-shadow: 0 14px 70px rgba(0, 0, 0, .32); font-size: 40px; letter-spacing: 1.250px; }
  .main { left: 750px; top: 87px; width: 844px; height: 1641px; background: linear-gradient(90deg, #fff 94%, #f7f7f7); }
  .sub { left: 1593px; top: 1400px; width: 800px; height: 321px; border-width: 3px 0 3px 3px; }
  .entry { height: 80px; display: flex; align-items: center; padding-left: 20px; padding-right: 16px; }
  .glyph { width: 54px; height: 80px; }
  .caption { margin-left: 17px; line-height: 1.3; }
  .dots { margin-left: -7px; letter-spacing: .5px; }
  .caption u { text-decoration-thickness: 2px; text-underline-offset: 7px; text-decoration-skip-ink: none; }
  .more { width: 13px; height: 26px; margin-left: auto; fill: #555; }
  .hot { background: #72a5f2; color: #fff; box-shadow: inset 0 2px #6b98dc, inset 0 -2px #6b98dc; }
  .hot .more { fill: #c9dbf8; }
  .menu hr { height: 6.5px; margin: 0 12px; border: 0; background: linear-gradient(#c9c9c9, #c9c9c9) 0 2px / 100% 2px no-repeat; }

  .dialog { position: absolute; left: 2380px; top: 3px; width: 1950px; height: 1889px; background: #ececec; border-radius: 6px 26px 26px 6px; overflow: hidden; }
  header { height: 82px; background: #fdf4ee; border-bottom: 2px solid #cdc9c6; display: flex; align-items: center; position: relative; }
  .lights { display: flex; gap: 24px; margin-left: 12px; padding-bottom: 3px; }
  .lights i { width: 35.500px; height: 35.500px; border-radius: 50%; }
  .r { background: #ff5f57; } .g { background: #dfdbd5; border: 1.500px solid #cdc9c4; } .n { background: #28c840; }
  h1 { flex: 1; text-align: center; padding-right: 180px; padding-bottom: 4px; font-size: 38px; font-weight: 700; letter-spacing: .6px; color: #484644; }
  .form { padding: 49px 0 0 48px; }
  .row { display: flex; align-items: center; }
  .form .row { height: 88.500px; }
  .label { width: 218px; flex: none; }
  .mark { border: 14px solid #f00; background: linear-gradient(#fdfdfd, #ebebeb); display: flex; align-items: center; color: #111; flex: none; }
  .caret { width: 23px; height: 12px; margin-left: auto; fill: #595959; }
  .format { width: 1634px; height: 71px; margin-left: 4px; padding: 0 19px 0 4px; }
  .input { background: #fff; border: 2.500px solid #a9a9a9; border-radius: 7px; height: 70px; margin-left: 7px; flex: none; display: flex; align-items: center; }
  .file { width: 1534px; border-color: #6f9bc4; box-shadow: inset 0 0 0 3px #eaf2fa; padding: 0 23px 0 6px; }
  .file b { width: 3px; height: 46px; background: #000; }
  .file span { margin-left: -2px; }
  .file svg { width: 39px; height: 30px; margin-left: auto; }
  .browse { width: 98px; height: 73px; margin-left: 6px; padding-left: 19px; font-size: 32px; background: linear-gradient(90deg, transparent 63px, #aaa 63px 65px, #ececec 65px), linear-gradient(#fdfdfd, #ebebeb); }
  .layer { width: 1620px; }
  .crs { width: 1638px; height: 81px; border-color: #4472c4; background: #ececec; align-items: stretch; }
  .combo-part { width: 1530px; display: flex; align-items: center; padding: 0 21px 0 8px; background: linear-gradient(#fdfdfd, #ebebeb); border-right: 3px solid #aaa; }
  .globe-btn { margin-left: 13px; flex: 1; border-left: 2px solid #aaa; background: #f8f8f8; display: flex; align-items: center; padding-left: 10px; }
  .globe-btn svg { width: 50px; height: 44px; }
  .group { margin: 36px 0 0 21px; width: 1898px; height: 1247px; border: 2px solid #bbb; }
  .encoding { height: 128px; padding-left: 28px; }
  .encoding > span { width: 927px; }
  .utf { width: 933px; height: 82px; padding: 0 29px 0 3px; background: linear-gradient(90deg, transparent 897px, #aaa 897px 899px, #ececec 899px), linear-gradient(#fdfdfd, #ebebeb); }
  .line46 { height: 46px; padding-left: 29px; }
  .check { width: 41px; height: 41px; }
  .check rect { fill: #fff; stroke: #b8b8b8; stroke-width: 2.400px; }
  .check path { fill: none; stroke: #222; stroke-width: 4.500px; }
  .check.off rect { fill: none; stroke: #bdbdbd; }
  .txt { margin-left: 15px; }
  .head { padding-left: 35px; }
  .twisty { width: 32px; height: 32px; fill: #444; stroke: #1c1c1c; stroke-width: 2px; }
  .head strong { margin-left: 26px; font-weight: 700; letter-spacing: 1.200px; }
  .h108 { height: 108px; }
  .geo { height: 87px; padding-top: 24px; }
  .panel { margin-left: 31px; width: 1837px; background: #e8e8e8; border: 2px solid #d2d2d2; border-radius: 4px; padding-left: 31px; }
  .p1 { height: 302px; padding-top: 23px; }
  .h86 { height: 86px; } .h84 { height: 84px; } .h82 { height: 82px; }
  .h86 > span { width: 894px; }
  .combo { height: 71px; border: 2.500px solid #a5a5a5; border-radius: 7px; background: linear-gradient(#fefefe, #e9e9e9); display: flex; align-items: center; padding: 0 20px 0 12px; color: #111; flex: none; }
  .auto { width: 875px; }
  .dim { color: #b0b0b0; }
  .extent { height: 88px; }
  .extent .check { margin-left: 20px; margin-top: -4px; }
  .extent strong { margin-left: 24px; }
  .lopt { height: 62px; }
  .lopt strong { margin-left: 26px; }
  .p2 { height: 226px; padding-top: 21px; }
  .key { width: 146px; }
  .h90 { height: 90px; } .h89 { height: 89px; }
  .wide { width: 1623px; }
  .custom { height: 92px; }
  footer { display: flex; align-items: center; height: 110px; }
  .button { height: 71px; border: 2.500px solid #a8a8a8; border-radius: 8px; background: linear-gradient(#fefefe, #e9e9e9); color: #111; display: flex; align-items: center; justify-content: center; flex: none; }
  .help { width: 236px; margin-left: 240px; }
  .addmap { display: flex; align-items: center; width: 483px; margin-left: 471px; }
  .cancel { width: 237px; }
  .ok { width: 240px; height: 82px; margin-left: 20px; margin-top: 4px; justify-content: center; background: linear-gradient(#fdfdfd, #dfe4ea); box-shadow: -3px 0 0 -1px #4a9df0; padding: 0 11px 4px 0; }

  .num { position: absolute; width: 80px; height: 80px; border: 3px solid #f00; border-radius: 50%; color: #f00; display: flex; align-items: center; justify-content: center; font: 700 70px/1 "Noto Sans CJK JP", sans-serif; letter-spacing: 0; padding-bottom: 6px; }
  .n1 { left: 4235px; top: 47px; }
  .n2 { left: 4239px; top: 306px; }
  .n3 { left: 2671px; top: 506px; color: #4472c4; border-color: #4472c4; }
  .n4 { left: 4221px; top: 642px; }
  .n5 { left: 4243px; top: 1666px; }
  .arrow { position: absolute; left: 2270px; top: 1295px; width: 150px; height: 247px; }
</style>
